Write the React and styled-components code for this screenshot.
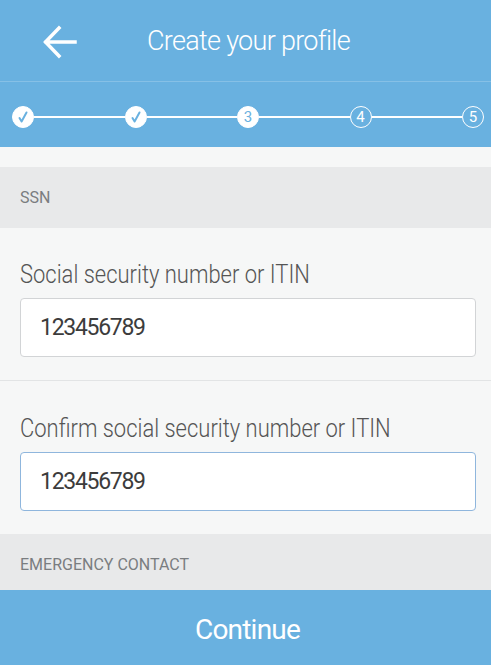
import React from "react";
import styled, { createGlobalStyle } from "styled-components";

const Global = createGlobalStyle`
  html, body { margin: 0; padding: 0; }
  body { font-family: Roboto, "Liberation Sans", sans-serif; background: #f6f7f7; }
  * { box-sizing: border-box; }
`;

const Page = styled.div`
  height: 665px;
  display: flex;
  flex-direction: column;
  background: #f6f7f7;
  overflow: hidden;
`;

const Header = styled.header`
  background: #69b1e0;
  flex: none;
`;

const TopBar = styled.div`
  height: 82px;
  position: relative;
  display: flex;
  align-items: center;
  justify-content: center;
  border-bottom: 1px solid #86c0e6;
`;

const BackButton = styled.button`
  position: absolute;
  left: 38px;
  top: 22px;
  width: 44px;
  height: 40px;
  border: 0;
  background: none;
  padding: 0;
  display: flex;
  align-items: center;
  justify-content: center;
  cursor: pointer;
`;

const Title = styled.h1`
  margin: 0;
  font-weight: 300;
  font-size: 27px;
  color: #fff;
  letter-spacing: -0.7px;
  transform: translateX(3px);
`;

const Steps = styled.div`
  height: 65px;
  display: flex;
  align-items: center;
  padding: 4px 7px 0 12px;
`;

const Line = styled.div`
  flex: 1;
  height: 2px;
  background: #fff;
`;

const Dot = styled.div`
  width: 22px;
  height: 22px;
  border-radius: 50%;
  flex: none;
  display: flex;
  align-items: center;
  justify-content: center;
  font-size: 15px;
  font-weight: 400;
  background: ${(p) => (p.$filled ? "#fff" : "transparent")};
  color: ${(p) => (p.$filled ? "#69b1e0" : "#fff")};
  border: 1.5px solid #fff;
`;

const Content = styled.main`
  flex: 1;
  overflow: hidden;
  padding-top: 20px;
`;

const SectionHead = styled.div`
  background: #e8e9ea;
  height: ${(p) => p.$h}px;
  display: flex;
  align-items: center;
  padding-left: 20px;
  font-size: 16px;
  color: #7a7d80;
  text-transform: uppercase;
  font-weight: 400;
`;

const Field = styled.div`
  padding: ${(p) => p.$top}px 15px 23px 20px;
  border-bottom: ${(p) => (p.$divider ? "1px solid #e2e4e5" : "none")};
`;

const Label = styled.label`
  display: block;
  font-size: 26px;
  line-height: 26px;
  font-weight: 300;
  color: #555;
  margin-bottom: 11px;
  white-space: nowrap;
  transform: scaleX(0.845);
  transform-origin: left center;
`;

const Input = styled.input`
  display: block;
  width: 100%;
  height: 59px;
  border: 1px solid ${(p) => (p.$focused ? "#8fb6dd" : "#d2d4d6")};
  border-radius: 4px;
  background: #fff;
  padding: 0 19px;
  font-family: Roboto, "Liberation Sans", sans-serif;
  font-size: 23px;
  letter-spacing: -1.3px;
  color: #3c3c3c;
  outline: none;
  caret-color: #333;
`;

const Footer = styled.button`
  flex: none;
  height: 75px;
  border: 0;
  background: #69b1e0;
  color: #fff;
  font-family: Roboto, "Liberation Sans", sans-serif;
  font-size: 28px;
  letter-spacing: -0.8px;
  font-weight: 400;
  width: 100%;
  cursor: pointer;
  padding: 4px 0 0 4px;
`;

const Check = () => (
  <svg width="12" height="14" viewBox="0 0 12 14">
    <path d="M2.5 8 L4.6 11.5 L9.5 2.5" fill="none" stroke="#69b1e0" strokeWidth="2" strokeLinecap="round" strokeLinejoin="round" />
  </svg>
);

const Arrow = () => (
  <svg width="36" height="36" viewBox="0 0 36 36">
    <path d="M33 18 H4 M17 4 L3.5 18 L17 32" fill="none" stroke="#fff" strokeWidth="3.5" strokeLinecap="square" />
  </svg>
);

export default function App() {
  return (
    <Page>
      <Global />
      <Header>
        <TopBar>
          <BackButton aria-label="Back"><Arrow /></BackButton>
          <Title>Create your profile</Title>
        </TopBar>
        <Steps>
          <Dot $filled><Check /></Dot>
          <Line />
          <Dot $filled><Check /></Dot>
          <Line />
          <Dot $filled>3</Dot>
          <Line />
          <Dot>4</Dot>
          <Line />
          <Dot>5</Dot>
        </Steps>
      </Header>
      <Content>
        <SectionHead $h={61}>SSN</SectionHead>
        <Field $top={33} $divider>
          <Label>Social security number or ITIN</Label>
          <Input defaultValue="123456789" />
        </Field>
        <Field $top={34}>
          <Label>Confirm social security number or ITIN</Label>
          <Input $focused defaultValue="123456789" autoFocus />
        </Field>
        <SectionHead $h={61}>Emergency contact</SectionHead>
      </Content>
      <Footer>Continue</Footer>
    </Page>
  );
}
